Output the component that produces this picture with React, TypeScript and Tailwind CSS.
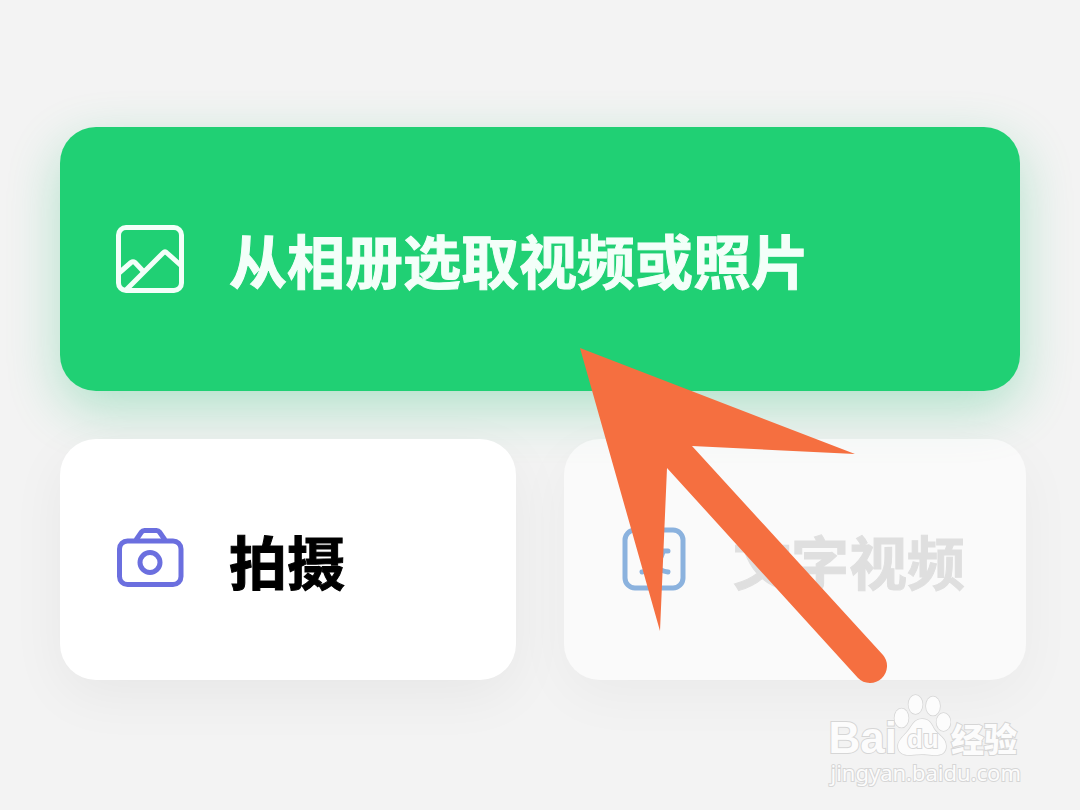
import clsx from "clsx";
import type { ReactNode } from "react";

function AlbumIcon() {
  return (
    <svg viewBox="0 0 68 68" className="size-[68px] shrink-0" fill="none" stroke="currentColor" strokeWidth="5" strokeLinejoin="round" aria-hidden="true">
      <rect x="2.5" y="2.5" width="63" height="63" rx="7.5" />
      <path d="M3 48 15 37.500q2-1.500 4 0L27 46" />
      <path d="M10 65 47 28q2-2 4 0l14.500 13" />
    </svg>
  );
}

function CameraIcon() {
  return (
    <svg viewBox="0 0 68 68" className="size-[68px] shrink-0 text-[#6b6fdf]" fill="none" stroke="currentColor" strokeWidth="5" strokeLinejoin="round" aria-hidden="true">
      <rect x="3.500" y="15" width="61.500" height="43.500" rx="8" />
      <path d="M20 14 25.500 6q1-1.500 3-1.500h12q2 0 3 1.500l5.500 8" />
      <circle cx="34" cy="36.500" r="10" />
    </svg>
  );
}

function TextVideoIcon() {
  return (
    <svg viewBox="0 0 68 68" className="size-[68px] shrink-0 text-[#8bb2de]" fill="none" stroke="currentColor" strokeWidth="5" strokeLinecap="round" aria-hidden="true">
      <rect x="5" y="4" width="58" height="58" rx="10" />
      <path d="M22 25h26M22 46q15-2 21-20M48 46q-15-2-21-20" />
    </svg>
  );
}

type CardProps = {
  icon: ReactNode;
  label: string;
  className: string;
  disabled?: boolean;
};

function Card({ icon, label, className, disabled }: CardProps) {
  return (
    <button
      type="button"
      disabled={disabled}
      className={clsx(
        "flex w-full items-center gap-[45px] rounded-[36px] px-14 text-left text-[58px] leading-[62px] font-bold whitespace-nowrap",
        className
      )}
    >
      {icon}
      <span className="[-webkit-text-stroke:1px_currentColor]">{label}</span>
    </button>
  );
}

function Pointer() {
  return (
    <svg viewBox="0 0 308 336" className="pointer-events-none absolute top-[221px] left-[520px] w-[308px]" fill="#f56f40" aria-hidden="true">
      <path d="M0 0 275 106 112 98 303 307A17 17 0 0 1 278 330L87 120 80 283Z" />
    </svg>
  );
}

function Watermark() {
  return (
    <div className="absolute right-[59px] bottom-6 text-[#fcfcfc] [paint-order:stroke_fill] [-webkit-text-stroke:2px_#d6d6d6]">
      <div className="-ml-0.5 flex h-16 items-end">
        <span className="font-['Liberation_Sans'] text-[44px] leading-10 font-bold">Bai</span>
        <div className="relative -ml-1 h-16 w-[58px]">
          <svg viewBox="0 0 58 64" className="h-16 w-[58px]" fill="#fcfcfc" stroke="#d6d6d6" strokeWidth="1.5" aria-hidden="true">
            <ellipse cx="8.500" cy="24" rx="7" ry="9.500" />
            <ellipse cx="22.500" cy="10.500" rx="7" ry="9.500" />
            <ellipse cx="40" cy="12" rx="7" ry="9.500" />
            <ellipse cx="50.500" cy="28" rx="7" ry="9" />
            <path d="M29 25c-8 0-10 7-14 12s-10 9-10 15c0 7 6 9.500 13 9 7-1 15-1 21 0 9 1 14-2 14-9 0-8-8-11-12-17-3-6-5-10-12-10Z" />
          </svg>
          <span className="absolute bottom-1.5 left-[14px] font-['Liberation_Sans'] text-[26px] leading-[26px] font-bold">du</span>
        </div>
        <span className="text-[33px] leading-10 font-black">经验</span>
      </div>
      <div className="font-['Noto_Sans'] text-[22px] leading-7">jingyan.baidu.com</div>
    </div>
  );
}

export default function App() {
  return (
    <div className="relative min-h-screen bg-[#f3f3f3] px-[60px] pt-[127px] pb-[130px] font-['Noto_Sans_CJK_SC',sans-serif]">
      <main className="relative flex flex-col gap-12">
        <Card
          icon={<AlbumIcon />}
          label="从相册选取视频或照片"
          className="h-[264px] bg-[#20d074] text-[#f3fff9] shadow-[0_18px_52px_rgba(24,190,110,0.3)]"
        />
        <div className="-mr-1.5 grid grid-cols-[456fr_462fr] gap-12">
          <Card
            icon={<CameraIcon />}
            label="拍摄"
            className="h-[241px] bg-white text-black shadow-[0_16px_56px_rgba(0,0,0,0.05)]"
          />
          <Card
            icon={<TextVideoIcon />}
            label="文字视频"
            disabled
            className="h-[241px] bg-white/55 text-[#dfdfdf] shadow-[0_16px_56px_rgba(0,0,0,0.04)]"
          />
        </div>
        <Pointer />
      </main>
      <Watermark />
    </div>
  );
}
